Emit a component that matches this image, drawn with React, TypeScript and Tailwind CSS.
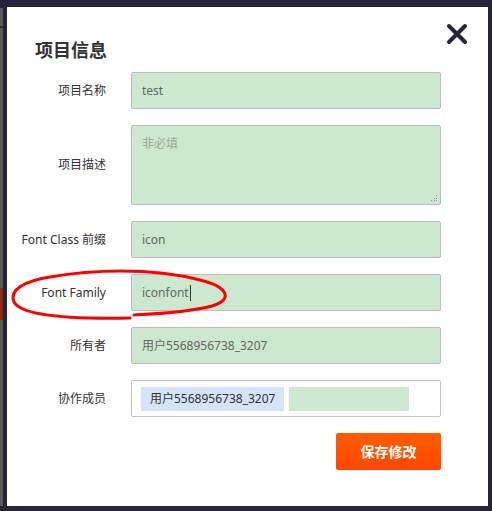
import { ReactNode } from 'react';

const font = { fontFamily: '"Noto Sans", "Noto Sans CJK SC", sans-serif' };

function Row({ label, children, tall }: { label: string; children: ReactNode; tall?: boolean }) {
  return (
    <div className={`flex ${tall ? 'h-[80px]' : 'h-[37px]'} items-center`}>
      <label className="w-[99px] shrink-0 text-right text-[12px] text-[#333]">{label}</label>
      <div className="ml-[25px] h-full w-[310px]">{children}</div>
    </div>
  );
}

function Field({ value, caret }: { value: string; caret?: boolean }) {
  return (
    <div className="flex h-full items-center rounded-[2px] border border-[#bdbdbd] bg-[#cce8cf] px-[10px] text-[12px] text-[#666]">
      {value}
      {caret && <span className="ml-px inline-block h-[16px] w-px bg-[#333]" />}
    </div>
  );
}

export default function App() {
  return (
    <div className="relative flex h-[511px] w-[492px] bg-[#25243a] pr-[4px] pb-[5px]" style={font}>
      {/* page behind the dialog */}
      <div className="mt-[8px] w-[3px] bg-[#5a5a5a]">
        <div className="mt-[18px] h-[2px] bg-[#2a2a2a]" />
        <div className="mt-[260px] h-[32px] bg-[#8a2a0a]" />
      </div>
      <div className="ml-[4px] mt-[7px] flex-1 bg-white">
        <div className="flex items-start justify-between pl-[28px] pr-[20px]">
          <h2 className="mt-[31px] text-[18px] font-bold leading-[24px] text-[#333]">项目信息</h2>
          <button className="mt-[16px]">
            <svg width="22" height="22" viewBox="0 0 22 22">
              <path d="M3 3 L19 19 M19 3 L3 19" stroke="#25243a" strokeWidth="4" strokeLinecap="round" />
            </svg>
          </button>
        </div>

        <div className="mt-[10px] flex flex-col gap-[16px]">
          <Row label="项目名称">
            <Field value="test" />
          </Row>
          <Row label="项目描述" tall>
            <div className="relative h-full w-full">
              <textarea
                className="h-full w-full resize-none rounded-[2px] border border-[#bdbdbd] bg-[#cce8cf] px-[10px] py-[9px] text-[12px] text-[#666] placeholder:text-[#9aa89c] outline-none"
                placeholder="非必填"
              />
              <svg className="absolute bottom-[3px] right-[3px]" width="7" height="7" viewBox="0 0 7 7">
                <rect x="5" y="0" width="1" height="1" fill="#9a9a9a" />
                <rect x="3" y="3" width="1" height="1" fill="#9a9a9a" />
                <rect x="5" y="3" width="1" height="1" fill="#9a9a9a" />
                <rect x="0" y="5" width="1" height="1" fill="#9a9a9a" />
                <rect x="3" y="5" width="1" height="1" fill="#9a9a9a" />
                <rect x="5" y="5" width="1" height="1" fill="#9a9a9a" />
              </svg>
            </div>
          </Row>
          <Row label="Font Class 前缀">
            <Field value="icon" />
          </Row>
          <Row label="Font Family">
            <Field value="iconfont" caret />
          </Row>
          <Row label="所有者">
            <Field value="用户5568956738_3207" />
          </Row>
          <Row label="协作成员">
            <div className="flex h-full items-center gap-[5px] rounded-[2px] border border-[#c4c4c4] bg-white px-[9px]">
              <span className="flex h-[24px] items-center bg-[#d6e4fb] px-[9px] text-[12px] text-[#333]">
                用户5568956738_3207
              </span>
              <span className="h-[24px] w-[120px] bg-[#cce8cf]" />
            </div>
          </Row>
        </div>

        <div className="mt-[16px] flex justify-end pr-[47px]">
          <button className="h-[37px] w-[105px] rounded-[2px] bg-gradient-to-b from-[#ff5c00] to-[#ff4600] text-[14px] font-bold text-white">
            保存修改
          </button>
        </div>
      </div>

      {/* hand-drawn annotation */}
      <svg className="pointer-events-none absolute left-0 top-0" width="492" height="511">
        <path
          d="M130 318 C 80 319, 22 317, 14 302 C 9 290, 24 281, 50 277 C 90 270, 150 267, 200 280 C 229 287, 233 300, 212 306 C 185 313, 150 314, 134 315"
          fill="none"
          stroke="#ff0000"
          strokeWidth="3"
          strokeLinecap="round"
        />
      </svg>
    </div>
  );
}
